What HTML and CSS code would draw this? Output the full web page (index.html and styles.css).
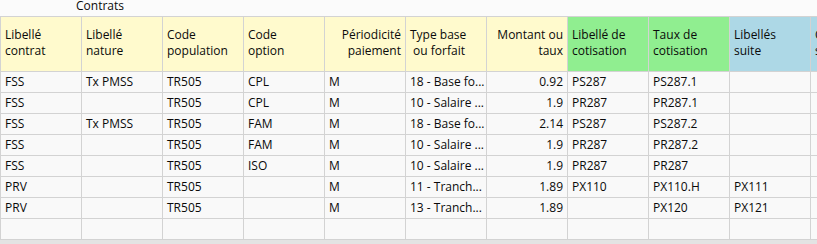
FILE: index.html
```html
<!DOCTYPE html>
<html lang="fr">
<head>
<meta charset="utf-8">
<title>Contrats</title>
<link rel="stylesheet" href="styles.css">
</head>
<body>
<div class="view">
  <div class="group-title">Contrats</div>
  <div class="grid">
    <div class="hc y">Libellé<br>contrat</div>
    <div class="hc y">Libellé<br>nature</div>
    <div class="hc y">Code<br>population</div>
    <div class="hc y">Code<br>option</div>
    <div class="hc y r">Périodicité<br>paiement</div>
    <div class="hc y">Type base<br>&nbsp;ou forfait</div>
    <div class="hc y r">Montant ou<br>taux</div>
    <div class="hc g">Libellé de<br>cotisation</div>
    <div class="hc g">Taux de<br>cotisation</div>
    <div class="hc b">Libellés<br>suite</div>
    <div class="hc b">Code<br>suite</div>

    <div class="c">FSS</div><div class="c">Tx PMSS</div><div class="c">TR505</div><div class="c">CPL</div><div class="c">M</div><div class="c">18 - Base fo...</div><div class="c r">0.92</div><div class="c">PS287</div><div class="c">PS287.1</div><div class="c"></div><div class="c"></div>
    <div class="c">FSS</div><div class="c"></div><div class="c">TR505</div><div class="c">CPL</div><div class="c">M</div><div class="c">10 - Salaire ...</div><div class="c r">1.9</div><div class="c">PR287</div><div class="c">PR287.1</div><div class="c"></div><div class="c"></div>
    <div class="c">FSS</div><div class="c">Tx PMSS</div><div class="c">TR505</div><div class="c">FAM</div><div class="c">M</div><div class="c">18 - Base fo...</div><div class="c r">2.14</div><div class="c">PS287</div><div class="c">PS287.2</div><div class="c"></div><div class="c"></div>
    <div class="c">FSS</div><div class="c"></div><div class="c">TR505</div><div class="c">FAM</div><div class="c">M</div><div class="c">10 - Salaire ...</div><div class="c r">1.9</div><div class="c">PR287</div><div class="c">PR287.2</div><div class="c"></div><div class="c"></div>
    <div class="c">FSS</div><div class="c"></div><div class="c">TR505</div><div class="c">ISO</div><div class="c">M</div><div class="c">10 - Salaire ...</div><div class="c r">1.9</div><div class="c">PR287</div><div class="c">PR287</div><div class="c"></div><div class="c"></div>
    <div class="c">PRV</div><div class="c"></div><div class="c">TR505</div><div class="c"></div><div class="c">M</div><div class="c">11 - Tranch...</div><div class="c r">1.89</div><div class="c">PX110</div><div class="c">PX110.H</div><div class="c">PX111</div><div class="c"></div>
    <div class="c">PRV</div><div class="c"></div><div class="c">TR505</div><div class="c"></div><div class="c">M</div><div class="c">13 - Tranch...</div><div class="c r">1.89</div><div class="c"></div><div class="c">PX120</div><div class="c">PX121</div><div class="c"></div>
    <div class="c"></div><div class="c"></div><div class="c"></div><div class="c"></div><div class="c"></div><div class="c"></div><div class="c"></div><div class="c"></div><div class="c"></div><div class="c"></div><div class="c"></div>
  </div>
  <div class="hscroll"></div>
</div>
</body>
</html>
```

FILE: styles.css
```css
html, body {
  margin: 0;
  padding: 0;
  background: #fbfbfb;
  overflow: hidden;
}
.view {
  width: 817px;
  height: 244px;
  overflow: hidden;
  font-family: "Open Sans", "DejaVu Sans", sans-serif;
  font-size: 12px;
  color: #0a0a0a;
}
.group-title {
  height: 16px;
  line-height: 11px;
  padding-left: 76px;
}
.grid {
  display: grid;
  grid-template-columns: repeat(11, 81px);
  grid-template-rows: 55px repeat(8, 21px);
  border-top: 1px solid #d3d3d3;
  border-left: 1px solid #d3d3d3;
  width: max-content;
  background: #f9f9f9;
}
.hc, .c {
  border-right: 1px solid #d3d3d3;
  border-bottom: 1px solid #d3d3d3;
  padding: 0 4px;
  white-space: nowrap;
  overflow: hidden;
}
.hc {
  line-height: 16px;
  padding-top: 10px;
}
.c {
  line-height: 20px;
}
.r { text-align: right; }
.y { background: #fffacd; }
.g { background: #90ee90; }
.b { background: #add8e6; }
.hscroll {
  height: 6px;
  background: #e3e3e3;
}
```
